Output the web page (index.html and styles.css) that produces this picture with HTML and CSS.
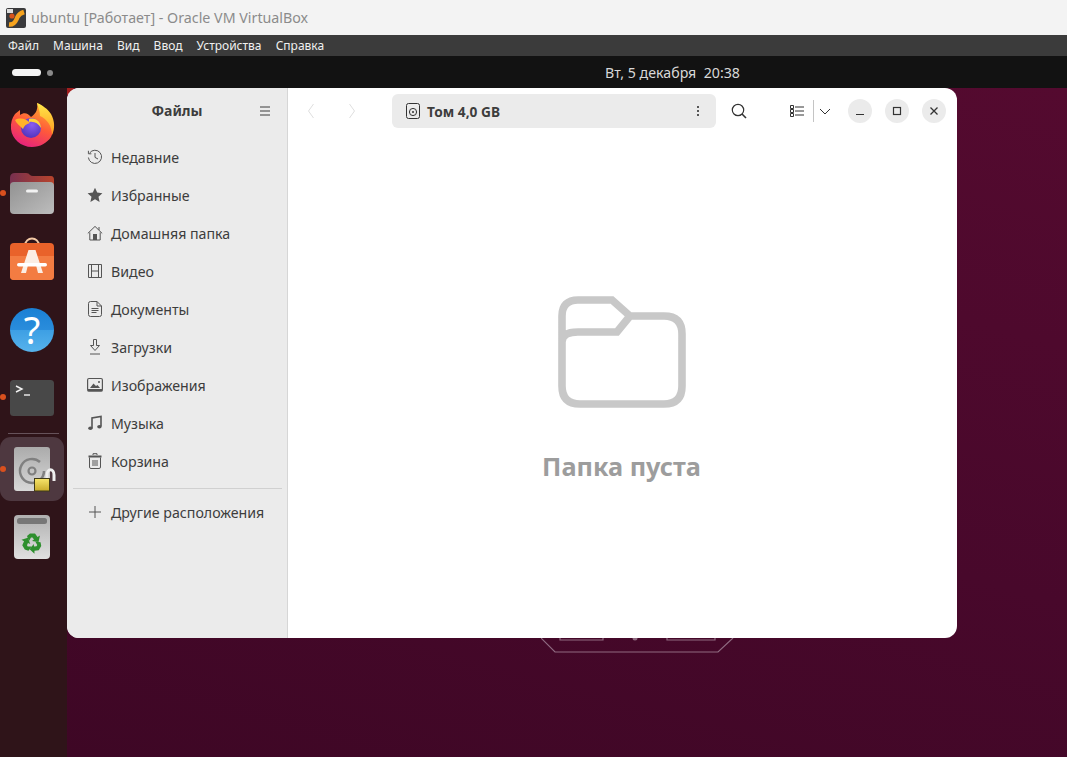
FILE: index.html
```html
<!DOCTYPE html>
<html lang="ru">
<head>
    <meta charset="UTF-8">
    <title>ubuntu [Работает] - Oracle VM VirtualBox</title>
    <link rel="stylesheet" href="styles.css">
</head>
<body>
    <div class="host-title">
        <svg class="host-icon" width="20" height="20" viewBox="0 0 20 20">
            <rect width="20" height="20" rx="2" fill="#3a3a3c"/>
            <rect x="1" y="1" width="6" height="4" fill="#ddd"/>
            <path d="M3 16.5 C9 17 10 12 11.5 9 C13 6 15 5 18 4" fill="none" stroke="#f6a31e" stroke-width="4.5"/>
            <circle cx="6" cy="8" r="2.6" fill="#d8541c"/>
        </svg>
        <span>ubuntu [Работает] - Oracle VM VirtualBox</span>
    </div>
    <div class="host-menu">
        <span class="host-menu-item">Файл</span>
        <span class="host-menu-item">Машина</span>
        <span class="host-menu-item">Вид</span>
        <span class="host-menu-item">Ввод</span>
        <span class="host-menu-item">Устройства</span>
        <span class="host-menu-item">Справка</span>
    </div>
    <div class="top-bar">
        <div class="workspaces"><span class="ws-pill"></span><span class="ws-dot"></span></div>
        <div class="clock">Вт, 5 декабря&nbsp;&nbsp;20:38</div>
    </div>

    <div class="desktop">
        <div class="dock">
            <div class="dock-item">
                <svg width="64" height="68" viewBox="0 0 64 68">
                    <defs>
                        <linearGradient id="ffBody" x1="0.75" y1="0" x2="0.3" y2="1">
                            <stop offset="0" stop-color="#ffb52c"/>
                            <stop offset="0.5" stop-color="#ff5a3a"/>
                            <stop offset="1" stop-color="#e5207f"/>
                        </linearGradient>
                        <linearGradient id="ffFlame" x1="0.5" y1="0" x2="0.5" y2="1">
                            <stop offset="0" stop-color="#ffe84a"/>
                            <stop offset="1" stop-color="#ff9a1f"/>
                        </linearGradient>
                        <radialGradient id="ffGlobe" cx="0.55" cy="0.35" r="0.75">
                            <stop offset="0" stop-color="#8a5cf0"/>
                            <stop offset="1" stop-color="#4a2fb5"/>
                        </radialGradient>
                    </defs>
                    <path d="M37 12 C43 15 49 21 52 27 C54 33 54 40 51 46 C47 52 40 56 32 56 C21 56 12 48 11 38 C10.500 32 12 27 15 23 L20 19 L20 24 C24 21 28 22 31 26 C37 22 38 17 37 12 Z" fill="url(#ffBody)"/>
                    <path d="M37 12 C42 14 48 18 51 23 C55 30 55 38 52 44 C52 35 47 28 40 25 C40 20 38 16 37 12 Z" fill="url(#ffFlame)"/>
                    <circle cx="31" cy="37" r="10" fill="url(#ffGlobe)"/>
                    <path d="M15 29 C20 26 27 28 30 32 C26 33 24 35 23 38 C20 35 16 32 15 29 Z" fill="#ffb32a"/>
                    <path d="M29 28 C36 26 41 31 41 37 C38 32 34 30 29 31 Z" fill="#ffd23a"/>
                </svg>
            </div>
            <div class="dock-item">
                <span class="run-dot"></span>
                <svg width="64" height="68" viewBox="0 0 64 68">
                    <defs>
                        <linearGradient id="folderTab" x1="0" y1="0" x2="1" y2="0">
                            <stop offset="0" stop-color="#77304f"/>
                            <stop offset="1" stop-color="#b8442c"/>
                        </linearGradient>
                        <linearGradient id="folderFace" x1="0" y1="0" x2="1" y2="1">
                            <stop offset="0" stop-color="#929292"/>
                            <stop offset="1" stop-color="#bdbdbd"/>
                        </linearGradient>
                    </defs>
                    <path d="M10 19 Q10 14 15 14 H26 Q29 14 30 16 Q31 17 33 17 H51 Q54 17 54 21 V36 H10 Z" fill="url(#folderTab)"/>
                    <rect x="10" y="23" width="44" height="32" rx="4" fill="url(#folderFace)"/>
                    <rect x="26" y="30.500" width="12" height="3" rx="1.5" fill="#f2f2f2"/>
                </svg>
            </div>
            <div class="dock-item">
                <svg width="64" height="68" viewBox="0 0 64 68">
                    <path d="M25 19 C25 9 39 9 39 19" fill="none" stroke="#f3c9a5" stroke-width="2"/>
                    <rect x="10" y="16" width="44" height="37" rx="4" fill="#e9622a"/>
                    <path d="M10 29 H54 V49 Q54 53 50 53 H14 Q10 53 10 49 Z" fill="#f37c42"/>
                    <path d="M28.500 23 H35.500 L43 46 H38 L36 38 H28 L26 46 H21 Z" fill="#fbeee4"/>
                    <rect x="17" y="36" width="30" height="3.500" rx="1.700" fill="#fff"/>
                </svg>
            </div>
            <div class="dock-item">
                <svg width="64" height="68" viewBox="0 0 64 68">
                    <defs>
                        <linearGradient id="helpFace" x1="0" y1="0" x2="0" y2="1">
                            <stop offset="0" stop-color="#1a80d4"/>
                            <stop offset="0.5" stop-color="#2a8ddc"/>
                            <stop offset="0.5" stop-color="#3d9fe4"/>
                            <stop offset="1" stop-color="#57b3ec"/>
                        </linearGradient>
                    </defs>
                    <circle cx="32" cy="35" r="22" fill="url(#helpFace)"/>
                    <text class="help-mark" x="32" y="49" text-anchor="middle">?</text>
                </svg>
            </div>
            <div class="dock-item">
                <span class="run-dot"></span>
                <svg width="64" height="68" viewBox="0 0 64 68">
                    <rect x="10" y="17" width="44" height="36" rx="3.500" fill="#484848"/>
                    <path d="M16 23 L22 26 L16 29" fill="none" stroke="#f2f2f2" stroke-width="1.400"/>
                    <path d="M24 32 H30" stroke="#f2f2f2" stroke-width="1.400"/>
                </svg>
            </div>
            <div class="dock-sep"></div>
            <div class="dock-item active">
                <span class="run-dot"></span>
                <svg width="64" height="64" viewBox="0 0 64 64">
                    <defs>
                        <linearGradient id="diskFace" x1="0" y1="0" x2="0" y2="1">
                            <stop offset="0" stop-color="#ababab"/>
                            <stop offset="1" stop-color="#d8d8d8"/>
                        </linearGradient>
                        <linearGradient id="lockFace" x1="0" y1="0" x2="0" y2="1">
                            <stop offset="0" stop-color="#f7e56c"/>
                            <stop offset="1" stop-color="#c9ab2a"/>
                        </linearGradient>
                    </defs>
                    <rect x="14" y="10" width="36" height="44" rx="3" fill="url(#diskFace)"/>
                    <path d="M40 25 A12 12 0 1 0 44 34" fill="none" stroke="#808080" stroke-width="2.500"/>
                    <circle cx="32" cy="34" r="3.500" fill="none" stroke="#808080" stroke-width="2.200"/>
                    <path d="M47 43 V38 C47 31 54 31 54 38 V44" fill="none" stroke="#eee" stroke-width="3"/>
                    <rect x="34.500" y="41.500" width="15" height="12.500" fill="url(#lockFace)" stroke="#3f3a18"/>
                </svg>
            </div>
            <div class="dock-item trash">
                <svg width="64" height="64" viewBox="0 0 64 64">
                    <defs>
                        <linearGradient id="binFace" x1="0" y1="0" x2="0" y2="1">
                            <stop offset="0" stop-color="#b0b0b0"/>
                            <stop offset="1" stop-color="#e0e0e0"/>
                        </linearGradient>
                        <path id="recycleArm" d="M27 31 L30 28.500 H35 L37.500 32 L40 30.500 L38.500 37 L32 36 L34 34.500 L32.500 32.500 H31 L29 36 Z" fill="#2e8f2e"/>
                    </defs>
                    <rect x="14" y="10" width="36" height="44" rx="4" fill="url(#binFace)"/>
                    <rect x="17" y="13" width="30" height="6" rx="2.500" fill="#777"/>
                    <use href="#recycleArm"/>
                    <use href="#recycleArm" transform="rotate(120 32 38)"/>
                    <use href="#recycleArm" transform="rotate(240 32 38)"/>
                </svg>
            </div>
        </div>

        <div class="wallpaper">
            <svg class="wall-logo" width="200" height="20" viewBox="0 0 200 20">
                <path d="M0 0 L14 14 H177 L192 0" fill="none" stroke="#8f6a80" stroke-width="1.200"/>
                <path d="M19 0 V2 H62 V0 M126 0 V2 H174 V0" fill="none" stroke="#8f6a80" stroke-width="1.200"/>
                <circle cx="94" cy="0" r="2.500" fill="#8f6a80"/>
            </svg>

            <div class="window">
                <aside class="sidebar">
                    <div class="sidebar-head">
                        <span class="sidebar-title">Файлы</span>
                        <svg class="burger" width="12" height="12" viewBox="0 0 12 12"><path d="M1 2 H11 M1 6 H11 M1 10 H11" stroke="#3d3d3d"/></svg>
                    </div>
                    <nav class="places">
                        <div class="place">
                            <svg width="16" height="16" viewBox="0 0 16 16"><path d="M2.600 4 A6.600 6.600 0 1 1 1.400 8.500 M1.400 1.800 V4.800 H4.400 M8 4 V8.400 L11 10" fill="none" stroke="#555"/></svg>
                            <span>Недавние</span>
                        </div>
                        <div class="place">
                            <svg width="16" height="16" viewBox="0 0 16 16"><path d="M8 .8 L10.200 5.600 L15.400 6.200 L11.500 9.700 L12.600 15 L8 12.300 L3.400 15 L4.500 9.700 L.6 6.200 L5.800 5.600 Z" fill="#555"/></svg>
                            <span>Избранные</span>
                        </div>
                        <div class="place">
                            <svg width="16" height="16" viewBox="0 0 16 16"><path d="M.8 8.400 L8 1.400 L15.200 8.400 M2.800 7.400 V15 H13.200 V7.400" fill="none" stroke="#555"/><rect x="6" y="9" width="4" height="6" fill="#555"/><path d="M12 2 V5" stroke="#555"/></svg>
                            <span>Домашняя папка</span>
                        </div>
                        <div class="place">
                            <svg width="16" height="16" viewBox="0 0 16 16"><path d="M1.500 1.500 H14.500 V14.500 H1.500 Z M4.500 1.500 V14.500 M11.500 1.500 V14.500 M4.500 8 H11.500" fill="none" stroke="#555"/></svg>
                            <span>Видео</span>
                        </div>
                        <div class="place">
                            <svg width="16" height="16" viewBox="0 0 16 16"><path d="M1.500 2.500 Q1.500 .5 3.500 .5 H10 L14.500 5 V13.500 Q14.500 15.500 12.500 15.500 H3.500 Q1.500 15.500 1.500 13.500 Z M10 .5 V5 H14.500 M4.500 7.500 H11.500 M4.500 9.500 H11.500 M4.500 11.500 H9.500" fill="none" stroke="#555"/></svg>
                            <span>Документы</span>
                        </div>
                        <div class="place">
                            <svg width="16" height="16" viewBox="0 0 16 16"><path d="M6.500 .5 H9.500 V6.500 H12.500 L8 11.500 L3.500 6.500 H6.500 Z M3 15 H13" fill="none" stroke="#555"/></svg>
                            <span>Загрузки</span>
                        </div>
                        <div class="place">
                            <svg width="16" height="16" viewBox="0 0 16 16"><path d="M.6 3 Q.6 1.500 2 1.500 H14 Q15.400 1.500 15.400 3 V12 Q15.400 14 14 14 H2 Q.6 14 .6 12 Z" fill="none" stroke="#555" stroke-width="1.200"/><path d="M.6 12 H15.400 V14.500 H.6 Z" fill="#555"/><path d="M3 11 L6.500 6.500 L9 9 L10.500 8 L13 11 Z" fill="#555"/><circle cx="12" cy="5" r="1" fill="#555"/></svg>
                            <span>Изображения</span>
                        </div>
                        <div class="place">
                            <svg width="16" height="16" viewBox="0 0 16 16"><path d="M5 13 V3 L14 1.500 V11.500" fill="none" stroke="#555" stroke-width="1.600"/><ellipse cx="3.400" cy="13.300" rx="2.200" ry="1.800" fill="#555"/><ellipse cx="12.400" cy="11.800" rx="2.200" ry="1.800" fill="#555"/></svg>
                            <span>Музыка</span>
                        </div>
                        <div class="place">
                            <svg width="16" height="16" viewBox="0 0 16 16"><path d="M2.500 4.500 V14 Q2.500 15.500 4 15.500 H12 Q13.500 15.500 13.500 14 V4.500 M6 7 V13 M8 7 V13 M10 7 V13 M6 2 V.7 H10 V2" fill="none" stroke="#555"/><rect x="1.500" y="2.500" width="13" height="2" fill="#555"/></svg>
                            <span>Корзина</span>
                        </div>
                    </nav>
                    <div class="sidebar-sep"></div>
                    <div class="place other">
                        <svg width="16" height="16" viewBox="0 0 16 16"><path d="M8 2 V14 M2 8 H14" stroke="#555"/></svg>
                        <span>Другие расположения</span>
                    </div>
                </aside>

                <section class="content">
                    <header class="toolbar">
                        <div class="nav-arrows">
                            <svg width="8" height="16" viewBox="0 0 8 16"><path d="M6.500 1 L1.500 8 L6.500 15" fill="none" stroke="#dedede"/></svg>
                            <svg width="8" height="16" viewBox="0 0 8 16"><path d="M1.500 1 L6.500 8 L1.500 15" fill="none" stroke="#dedede"/></svg>
                        </div>
                        <div class="path-bar">
                            <svg width="14" height="16" viewBox="0 0 14 16"><rect x=".5" y=".5" width="13" height="15" rx="2" fill="none" stroke="#333"/><circle cx="7" cy="9" r="3.600" fill="none" stroke="#333"/><circle cx="7" cy="9" r="1" fill="#333"/></svg>
                            <span class="path-label">Том 4,0 GB</span>
                            <svg class="path-more" width="4" height="12" viewBox="0 0 4 12"><circle cx="2" cy="2" r="1.100" fill="#333"/><circle cx="2" cy="6" r="1.100" fill="#333"/><circle cx="2" cy="10" r="1.100" fill="#333"/></svg>
                        </div>
                        <svg class="search-icon" width="16" height="16" viewBox="0 0 16 16"><circle cx="7" cy="7" r="5.700" fill="none" stroke="#333" stroke-width="1.200"/><path d="M11 11 L15 15" stroke="#333" stroke-width="1.600"/></svg>
                        <svg class="list-icon" width="14" height="12" viewBox="0 0 14 12"><path d="M.5 .5 H3.500 V3.500 H.5 Z M.5 4.500 H3.500 V7.500 H.5 Z M.5 8.500 H3.500 V11.500 H.5 Z M5 2 H14 M5 6 H14 M5 10 H14" fill="none" stroke="#333"/></svg>
                        <span class="view-sep"></span>
                        <svg class="chevron" width="12" height="7" viewBox="0 0 12 7"><path d="M1 1 L6 6 L11 1" fill="none" stroke="#333"/></svg>
                        <div class="win-buttons">
                            <button class="win-btn"><svg width="10" height="10" viewBox="0 0 10 10"><path d="M1 8.500 H9" stroke="#333" stroke-width="1.200"/></svg></button>
                            <button class="win-btn"><svg width="10" height="10" viewBox="0 0 10 10"><rect x="1.500" y="1.500" width="7" height="7" fill="none" stroke="#333" stroke-width="1.200"/></svg></button>
                            <button class="win-btn"><svg width="10" height="10" viewBox="0 0 10 10"><path d="M1.500 1.500 L8.500 8.500 M8.500 1.500 L1.500 8.500" stroke="#333" stroke-width="1.300"/></svg></button>
                        </div>
                    </header>
                    <div class="empty">
                        <svg class="empty-folder" width="128" height="112" viewBox="0 0 128 112">
                            <path d="M4 20 Q4 4 20 4 H54 L72 20 H106 Q124 20 124 38 V90 Q124 108 106 108 H22 Q4 108 4 90 Z M4 46 Q4 36 20 36 H59 L72 20" fill="none" stroke="#c8c8c8" stroke-width="7.600"/>
                        </svg>
                        <div class="empty-label">Папка пуста</div>
                    </div>
                </section>
            </div>
        </div>
    </div>
</body>
</html>
```

FILE: styles.css
```css
* {
    margin: 0;
    padding: 0;
    box-sizing: border-box;
}

body {
    width: 1067px;
    height: 757px;
    overflow: hidden;
    display: flex;
    flex-direction: column;
    font-family: "Noto Sans", sans-serif;
    background-color: #000;
}

.host-title {
    height: 35px;
    flex-shrink: 0;
    background: #f3f3f3;
    display: flex;
    align-items: center;
    gap: 5px;
    padding-left: 6px;
    font-size: 14.25px;
    color: #8b8b8b;
}

.host-menu {
    height: 21px;
    flex-shrink: 0;
    background: #3b3b3b;
    display: flex;
    align-items: center;
    padding-left: 8px;
    gap: 14.1px;
    font-size: 12px;
    color: #f0f0f0;
}

.top-bar {
    height: 32px;
    flex-shrink: 0;
    background: #121212;
    position: relative;
    display: flex;
    align-items: center;
    justify-content: center;
}

.workspaces {
    position: absolute;
    left: 12px;
    top: 13px;
    display: flex;
    align-items: center;
    gap: 6px;
}

.ws-pill {
    width: 29px;
    height: 7px;
    border-radius: 4px;
    background: #f4f4f4;
}

.ws-dot {
    width: 6px;
    height: 6px;
    border-radius: 50%;
    background: #8a8a8a;
}

.clock {
    margin-left: 278px;
    font-size: 14.2px;
    color: #d8d8d8;
}

.desktop {
    flex: 1;
    display: flex;
    min-height: 0;
}

.dock {
    width: 67px;
    flex-shrink: 0;
    background: #2f1419;
    padding-top: 3px;
}

.dock-item {
    position: relative;
    width: 64px;
    height: 68px;
}

.dock-item svg {
    display: block;
}

.dock-item.active {
    height: 64px;
    background: #4e3840;
    border-radius: 11px;
}

.dock-item.trash {
    height: 64px;
    margin-top: 4px;
}

.dock-sep {
    height: 1px;
    margin: 2px 8px 3px;
    background: #66525a;
}

.run-dot {
    position: absolute;
    left: 0;
    top: 50%;
    width: 6px;
    height: 6px;
    margin-top: -3px;
    border-radius: 50%;
    background: #d9501e;
}

.help-mark {
    font-family: "Noto Sans", sans-serif;
    font-size: 38px;
    fill: #fff;
}

.wallpaper {
    flex: 1;
    position: relative;
    background:
        radial-gradient(circle at 0 0, #a31f1f 0, #a31f1f 6px, transparent 8px),
        linear-gradient(195deg, #540a2f 0%, #48082b 55%, #3e0725 100%);
}

.wall-logo {
    position: absolute;
    left: 474px;
    top: 550px;
}

.window {
    position: absolute;
    left: 0;
    top: 0;
    width: 890px;
    height: 550px;
    display: flex;
    border-radius: 12px;
    overflow: hidden;
    background: #fff;
}

.sidebar {
    width: 221px;
    flex-shrink: 0;
    background: #ebebeb;
    border-right: 1px solid #d6d6d6;
}

.sidebar-head {
    height: 44px;
    position: relative;
    display: flex;
    align-items: center;
    justify-content: center;
}

.sidebar-title {
    font-size: 14px;
    font-weight: 700;
    color: #3d3d3d;
}

.burger {
    position: absolute;
    left: 192px;
    top: 17px;
}

.places {
    padding-top: 6px;
}

.place {
    height: 38px;
    display: flex;
    align-items: center;
    gap: 8px;
    padding-left: 20px;
    font-size: 14.2px;
    color: #3d3d3d;
}

.place svg {
    flex-shrink: 0;
}

.sidebar-sep {
    height: 1px;
    margin: 8px 5px 4px 6px;
    background: #d0d0d0;
}

.content {
    flex: 1;
    display: flex;
    flex-direction: column;
    min-width: 0;
}

.toolbar {
    height: 46px;
    flex-shrink: 0;
    display: flex;
    align-items: center;
    padding-left: 19px;
}

.nav-arrows {
    width: 85px;
    display: flex;
    gap: 33px;
}

.path-bar {
    width: 324px;
    height: 34px;
    border-radius: 6px;
    background: #ebebeb;
    display: flex;
    align-items: center;
    gap: 7px;
    padding: 0 16px 0 14px;
}

.path-label {
    flex: 1;
    font-size: 13.7px;
    font-weight: 700;
    color: #3d3d3d;
}

.search-icon {
    margin-left: 15px;
}

.list-icon {
    margin-left: 43px;
}

.view-sep {
    width: 1px;
    height: 22px;
    margin: 0 5px 0 9px;
    background: #c4c4c4;
}

.win-buttons {
    display: flex;
    gap: 13px;
    margin-left: 17px;
}

.win-btn {
    width: 24px;
    height: 24px;
    border: 0;
    border-radius: 50%;
    background: #ebebeb;
    display: flex;
    align-items: center;
    justify-content: center;
}

.empty {
    flex: 1;
    display: flex;
    flex-direction: column;
    align-items: center;
    padding-top: 162px;
    padding-right: 2px;
}

.empty-label {
    margin-top: 41px;
    font-size: 25.3px;
    font-weight: 700;
    color: #9d9d9d;
}
```
